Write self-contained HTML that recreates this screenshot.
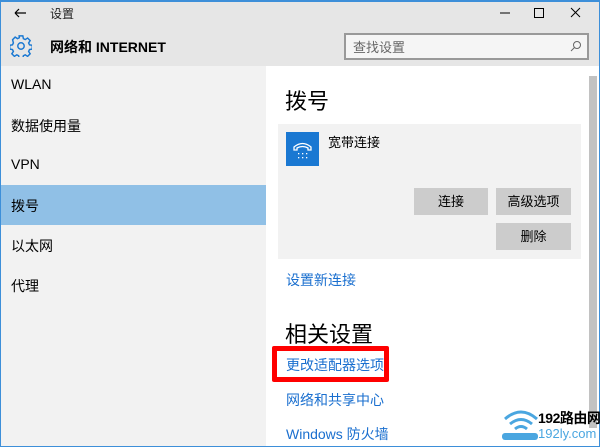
<!DOCTYPE html>
<html><head><meta charset="utf-8"><style>
*{margin:0;padding:0;box-sizing:border-box}
body{width:600px;height:447px;overflow:hidden;background:#fff;font-family:"Liberation Sans","Noto Sans CJK SC",sans-serif;position:relative;color:#000}
.a{position:absolute;white-space:nowrap}
.lk{color:#1a6fcf;font-size:14px}
.side{font-size:14px;left:11px}
.btn{position:absolute;background:#ccc;font-size:13px;text-align:center;line-height:27px;height:27px}
</style></head><body>
<div class="a" style="left:0;top:0;width:600px;height:66px;background:#e6e6e6"></div>
<div class="a" style="left:0;top:66px;width:266px;height:381px;background:#f2f2f2"></div>
<div class="a" style="left:0;top:185px;width:266px;height:40px;background:#90c0e6"></div>
<div class="a" style="left:0;top:0;width:600px;height:447px;border:1px solid #3d8fd9;border-top:2px solid #3d8fd9"></div>
<svg class="a" style="left:13px;top:7px" width="14" height="12"><path d="M2 6H13M2 6L6 2M2 6L6 10" stroke="#000" stroke-width="1.2" fill="none"/></svg>
<div class="a" style="left:50px;top:5px;font-size:12px;color:#222">设置</div>
<svg class="a" style="left:496px;top:6px" width="100" height="14"><path d="M4 7H14" stroke="#000"/><rect x="38.5" y="2.5" width="9" height="9" fill="none" stroke="#000"/><path d="M75 2L84 11M84 2L75 11" stroke="#000"/></svg>
<svg class="a" style="left:10px;top:35px" width="22" height="22" viewBox="0 0 24 24"><path d="M10 1h4l.6 3 2 1 2.6-1.7 2.8 2.8-1.7 2.6 1 2 3 .6v4l-3 .6-1 2 1.7 2.6-2.8 2.8-2.6-1.7-2 1-.6 3h-4l-.6-3-2-1-2.6 1.7-2.8-2.8 1.7-2.6-1-2-3-.6v-4l3-.6 1-2L2.8 5.1l2.8-2.8 2.6 1.7 2-1z" fill="none" stroke="#1a78d2" stroke-width="1.6"/><circle cx="12" cy="12" r="3.5" fill="none" stroke="#1a78d2" stroke-width="1.6"/></svg>
<div class="a" style="left:50px;top:37px;font-size:14px;font-weight:bold">网络和 INTERNET</div>
<div class="a" style="left:344px;top:33px;width:245px;height:27px;border:2px solid #999;background:#f5f5f5"></div>
<div class="a" style="left:353px;top:37px;font-size:13px;color:#666">查找设置</div>
<svg class="a" style="left:570px;top:40px" width="12" height="12"><circle cx="7" cy="5" r="3.5" fill="none" stroke="#666"/><path d="M4.5 7.5L1 11" stroke="#666"/></svg>
<div class="a side" style="top:76px">WLAN</div>
<div class="a side" style="top:116px">数据使用量</div>
<div class="a side" style="top:156px">VPN</div>
<div class="a side" style="top:196px">拨号</div>
<div class="a side" style="top:236px">以太网</div>
<div class="a side" style="top:276px">代理</div>
<div class="a" style="left:285px;top:84px;font-size:22px">拨号</div>
<div class="a" style="left:278px;top:124px;width:303px;height:135px;background:#f2f2f2"></div>
<div class="a" style="left:286px;top:132px;width:33px;height:34px;background:#1a78d2"></div>
<svg class="a" style="left:286px;top:132px" width="33" height="34"><path d="M8 18v-3q8.5-7 17 0v3h-3v-2q-5.5-3-11 0v2z" fill="none" stroke="#fff" stroke-width="1.3"/><g fill="#fff"><rect x="12" y="21" width="1.3" height="1.3"/><rect x="16" y="21" width="1.3" height="1.3"/><rect x="20" y="21" width="1.3" height="1.3"/><rect x="12" y="25" width="1.3" height="1.3"/><rect x="16" y="25" width="1.3" height="1.3"/><rect x="20" y="25" width="1.3" height="1.3"/></g></svg>
<div class="a" style="left:328px;top:132px;font-size:13px">宽带连接</div>
<div class="btn" style="left:414px;top:188px;width:74px">连接</div>
<div class="btn" style="left:496px;top:188px;width:75px">高级选项</div>
<div class="btn" style="left:496px;top:223px;width:75px">删除</div>
<div class="a lk" style="left:286px;top:270px">设置新连接</div>
<div class="a" style="left:285px;top:317px;font-size:22px">相关设置</div>
<div class="a" style="left:272px;top:346px;width:117px;height:36px;border:5px solid #f00;border-radius:2px"></div>
<div class="a lk" style="left:286px;top:355px">更改适配器选项</div>
<div class="a lk" style="left:286px;top:390px">网络和共享中心</div>
<div class="a lk" style="left:286px;top:424px">Windows 防火墙</div>
<div class="a" style="left:589px;top:76px;width:8px;height:352px;background:#c2c2c2"></div>
<svg class="a" style="left:500px;top:405px" width="40" height="35"><path d="M5 14q16-14 32 0M10 19q11-9 22 0M15 24q6-5 12 0" stroke="#4aa6e0" stroke-width="3" fill="none"/><rect x="2" y="28" width="36" height="7" rx="3" fill="#4aa6e0"/></svg>
<div class="a" style="left:538px;top:408px;font-size:14px;font-weight:bold;letter-spacing:-0.5px">192路由网</div>
<div class="a" style="left:538px;top:426px;font-size:13px;color:#4aa6e0">192ly.com</div>
</body></html>
